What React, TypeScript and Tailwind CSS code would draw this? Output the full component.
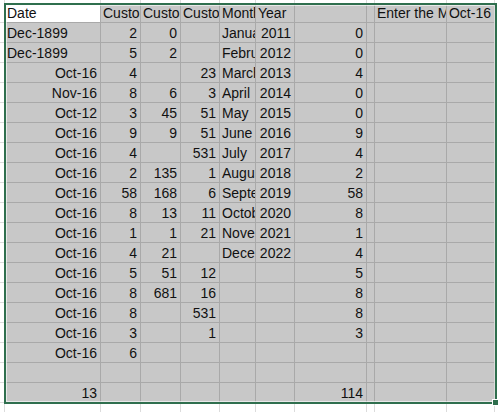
import React from 'react';

// column widths (incl. right gridline)
const COLS = [
  'w-[96px]',
  'w-[40px]',
  'w-[40px]',
  'w-[39px]',
  'w-[36px]',
  'w-[39px]',
  'w-[72px]',
  'w-[8px]',
  'w-[72px]',
  'w-[48px]',
];

const HEADER = ['Date', 'Customer 1', 'Customer 2', 'Customer 3', 'Month', 'Year', '', '', 'Enter the Month', 'Oct-16'];

const ROWS: string[][] = [
  ['Dec-1899', '2', '0', '', 'January', '2011', '0'],
  ['Dec-1899', '5', '2', '', 'February', '2012', '0'],
  ['Oct-16', '4', '', '23', 'March', '2013', '4'],
  ['Nov-16', '8', '6', '3', 'April', '2014', '0'],
  ['Oct-12', '3', '45', '51', 'May', '2015', '0'],
  ['Oct-16', '9', '9', '51', 'June', '2016', '9'],
  ['Oct-16', '4', '', '531', 'July', '2017', '4'],
  ['Oct-16', '2', '135', '1', 'August', '2018', '2'],
  ['Oct-16', '58', '168', '6', 'September', '2019', '58'],
  ['Oct-16', '8', '13', '11', 'October', '2020', '8'],
  ['Oct-16', '1', '1', '21', 'November', '2021', '1'],
  ['Oct-16', '4', '21', '', 'December', '2022', '4'],
  ['Oct-16', '5', '51', '12', '', '', '5'],
  ['Oct-16', '8', '681', '16', '', '', '8'],
  ['Oct-16', '8', '', '531', '', '', '8'],
  ['Oct-16', '3', '', '1', '', '', '3'],
  ['Oct-16', '6'],
  [],
  ['13', '', '', '', '', '', '114'],
];

const isRight = (v: string) => /^\d+$/.test(v) || /^[A-Z][a-z]{2}-\d{2}$/.test(v);

const Cell: React.FC<{ col: number; value?: string; white?: boolean }> = ({ col, value = '', white }) => (
  <div
    className={`${COLS[col]} h-full shrink-0 overflow-hidden whitespace-nowrap border-r border-b border-[#a9a9a9] ${
      white ? 'bg-white' : 'bg-[#c8c8c8]'
    } ${isRight(value) ? 'text-right pr-[3px]' : 'text-left pl-[2px]'}`}
  >
    {value}
  </div>
);

export default function App() {
  return (
    <div className="relative w-[502px] h-[412px] overflow-hidden bg-white font-['Liberation_Sans',Arial,sans-serif] text-[14px] text-[#111]">
      {/* strip above the selection */}
      <div className="flex h-[4px]">
        <div className="w-[5px] shrink-0 border-r border-[#dcdcdc]" />
        {COLS.map((w, i) => (
          <div key={i} className={`${w} shrink-0 border-r border-[#dcdcdc]`} />
        ))}
      </div>

      {/* header row */}
      <div className="flex h-[19px] leading-[19px]">
        <div className="w-[5px] shrink-0 border-b border-[#dcdcdc]" />
        {HEADER.map((h, i) => (
          <Cell key={i} col={i} value={h} white={i === 0} />
        ))}
      </div>

      {ROWS.map((row, r) => (
        <div key={r} className="flex h-[20px] leading-[21px]">
          <div className="w-[5px] shrink-0 border-b border-[#dcdcdc]" />
          {COLS.map((_, i) => (
            <Cell key={i} col={i} value={row[i]} />
          ))}
        </div>
      ))}

      {/* strip below the selection */}
      <div className="flex h-[12px]">
        <div className="w-[5px] shrink-0 border-r border-[#dcdcdc]" />
        {COLS.map((w, i) => (
          <div key={i} className={`${w} shrink-0 border-r border-[#dcdcdc]`} />
        ))}
      </div>

      {/* selection outline */}
      <div className="pointer-events-none absolute left-[4px] top-[3px] w-[493px] h-[401px] border-2 border-[#2f6f4e]">
        <div className="absolute inset-0 border border-white/60" />
      </div>
      <div className="pointer-events-none absolute left-[492px] top-[399px] w-[7px] h-[7px] bg-[#2f6f4e] border border-white" />
    </div>
  );
}
